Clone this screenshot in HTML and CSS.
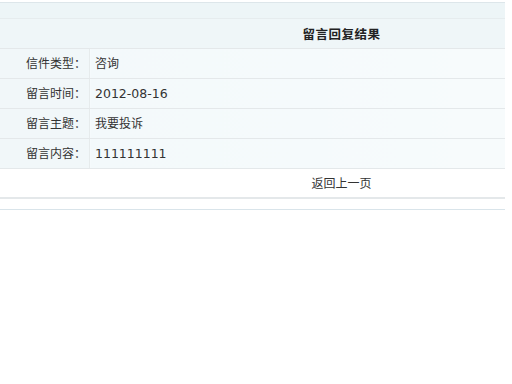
FILE: index.html
```html
<!DOCTYPE html>
<html lang="zh-CN">

<head>
  <meta charset="UTF-8" />
  <title>留言回复结果</title>
  <link rel="stylesheet" href="styles.css">
</head>

<body>
  <div class="top-band"></div>
  <table class="reply-table">
    <tr class="title-row">
      <th colspan="2">留言回复结果</th>
    </tr>
    <tr>
      <td class="label">信件类型：</td>
      <td class="value">咨询</td>
    </tr>
    <tr>
      <td class="label">留言时间：</td>
      <td class="value num">2012-08-16</td>
    </tr>
    <tr>
      <td class="label">留言主题：</td>
      <td class="value">我要投诉</td>
    </tr>
    <tr>
      <td class="label">留言内容：</td>
      <td class="value num">111111111</td>
    </tr>
    <tr class="back-row">
      <td colspan="2"><a href="#" onclick="history.back(); return false;">返回上一页</a></td>
    </tr>
  </table>
  <div class="bottom-line"></div>
</body>

</html>
```

FILE: styles.css
```css
body {
  margin: 0;
  padding-top: 2px;
  font-family: "Noto Sans CJK SC", "DejaVu Sans", sans-serif;
  font-size: 12px;
  line-height: 16px;
  color: #333333;
  background-color: #ffffff;
}

.top-band {
  width: 505px;
  height: 15px;
  border-top: 1px solid #dde6ea;
  border-bottom: 1px solid #e6ecee;
  background-color: #edf5f7;
}

.reply-table {
  width: 505px;
  border-collapse: collapse;
}

.reply-table td,
.reply-table th {
  height: 29px;
  padding: 0;
  border-bottom: 1px solid #e4e8ea;
}

.title-row th {
  background-color: #eff6f8;
  font-size: 12.5px;
  font-weight: bold;
  color: #222222;
  text-align: center;
  padding-left: 178px;
  letter-spacing: 0.5px;
}

.reply-table .label {
  width: 86px;
  height: 27px;
  padding: 0 3px 2px 0;
  text-align: right;
  background-color: #f1f7f9;
  border-right: 1px solid #e6ebec;
}

.reply-table .value {
  height: 27px;
  padding: 0 0 2px 5px;
  background: linear-gradient(to right, #f3f9fb, #f7fbfc);
}

.reply-table .num {
  padding: 1px 0 1px 5px;
  font-family: "DejaVu Sans", sans-serif;
  font-size: 12.5px;
}

.back-row td {
  height: 28px;
  text-align: center;
  padding-left: 178px;
  background-color: #ffffff;
  border-bottom: 2px solid #e4e8ea;
}

.back-row a {
  color: #333333;
  text-decoration: none;
}

.bottom-line {
  width: 505px;
  margin-top: 10px;
  border-top: 1px solid #d9e4ea;
}
```
